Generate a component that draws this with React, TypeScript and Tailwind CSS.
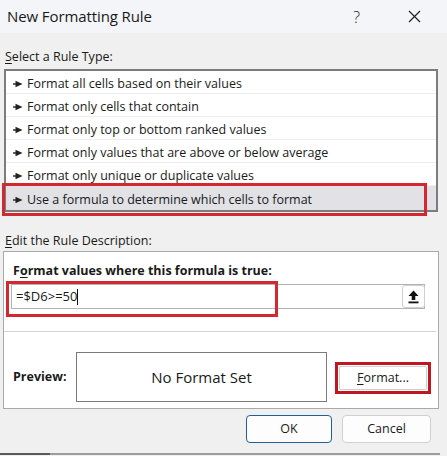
import React from "react";

const rules = [
  "Format all cells based on their values",
  "Format only cells that contain",
  "Format only top or bottom ranked values",
  "Format only values that are above or below average",
  "Format only unique or duplicate values",
  "Use a formula to determine which cells to format",
];

function Arrow() {
  return (
    <svg width="10" height="8" viewBox="0 0 10 8" className="shrink-0">
      <path d="M0 3.3h4V4.7H0z" fill="#222" />
      <path d="M2.5 0.8L9.5 4L2.5 7.2z" fill="#222" />
    </svg>
  );
}

export default function App() {
  return (
    <div
      className="relative w-[447px] h-[456px] bg-[#f0f0f0] overflow-hidden text-[#1a1a1a]"
      style={{ fontFamily: '"Open Sans", "Noto Sans", sans-serif' }}
    >
      {/* title bar */}
      <div className="h-[33px] bg-[#f3f5f8] flex items-center pl-[7px] pr-[20px]">
        <span className="text-[15px] tracking-[-0.1px]">New Formatting Rule</span>
        <span className="ml-auto text-[16px] mr-[48px] font-light">?</span>
        <svg width="13" height="13" viewBox="0 0 13 13" className="mr-[6px]">
          <path d="M1 1L12 12M12 1L1 12" stroke="#222" strokeWidth="1.2" />
        </svg>
      </div>

      <div className="pl-[5px] pt-[15px] h-[36px] text-[12.5px] leading-[18px]">
        <span className="underline underline-offset-2">S</span>elect a Rule Type:
      </div>

      {/* list */}
      <div className="ml-[4px] w-[434px] h-[143px] border-2 border-[#7c7c7c] bg-white flex flex-col">
        {rules.map((r, i) => (
          <div
            key={r}
            className={
              "flex items-center gap-[4px] pl-[7px] text-[12.5px] " +
              (i === 5
                ? "h-[25px] bg-[#e1e1e6] pt-[4px]"
                : "h-[23px] border-b border-[#eeeeee] pt-[4px]")
            }
          >
            <Arrow />
            <span>{r}</span>
          </div>
        ))}
      </div>
      <div className="absolute left-[2px] top-[183px] w-[425px] h-[33px] border-[3px] border-[#d3282f]" />

      <div className="pl-[5px] pt-[20px] h-[39px] text-[12.5px] leading-[18px]">
        <span className="underline underline-offset-2">E</span>dit the Rule Description:
      </div>

      {/* description box */}
      <div className="ml-[3px] w-[436px] h-[158px] border border-[#a9a9a9] bg-white flex flex-col">
        <div className="pl-[9px] pt-[10px] h-[32px] text-[12.5px] font-bold leading-[18px]">
          F<span className="underline underline-offset-2">o</span>rmat values where this formula is true:
        </div>
        <div className="ml-[7px] w-[414px] h-[25px] border border-[#b4b4b4] flex items-center">
          <span className="pl-[4px] text-[13px]">=$D6&gt;=50</span>
          <span className="w-px h-[16px] bg-[#111]" />
          <div className="ml-auto mr-[-1px] w-[23px] h-[23px] border border-[#cfcfcf] rounded-[3px] flex items-center justify-center bg-white">
            <svg width="11" height="14" viewBox="0 0 11 14">
              <path d="M5.5 0.5L10.5 6H7.3V10H3.7V6H0.5z" fill="#111" />
              <rect x="0.5" y="11.5" width="10" height="1.8" fill="#111" />
            </svg>
          </div>
        </div>
        <div className="mt-[22px] w-[432px] h-px bg-[#d5d5d5]" />
        <div className="flex items-center mt-[20px]">
          <span className="pl-[9px] w-[72px] text-[12.5px] font-bold">Preview:</span>
          <div className="w-[251px] h-[50px] border border-[#7a7a7a] flex items-center justify-center text-[15px]">
            No Format Set
          </div>
          <div className="ml-[8px] w-[96px] h-[32px] border-[3px] border-[#c0161f] flex items-center justify-center p-[1px] mt-[2px]">
            <div className="w-full h-full border border-[#d0d0d0] rounded-[2px] flex items-center justify-center text-[12.5px]">
              <span className="underline underline-offset-2">F</span>ormat...
            </div>
          </div>
        </div>
      </div>
      <div className="absolute left-[6px] top-[281px] w-[272px] h-[36px] border-[3px] border-[#d3282f]" />

      {/* buttons */}
      <div className="flex justify-end gap-[10px] pr-[16px] pt-[6px]">
        <div className="w-[86px] h-[28px] border border-[#1f5f9a] rounded-[4px] bg-[#fdfdfd] flex items-center justify-center text-[12.5px]">
          OK
        </div>
        <div className="w-[89px] h-[28px] border border-[#d0d0d0] rounded-[4px] bg-[#fdfdfd] flex items-center justify-center text-[12.5px]">
          Cancel
        </div>
      </div>

      <div className="absolute left-0 bottom-[1px] w-[440px] h-[2px] bg-[#9c9c9c]">
        <div className="w-[50px] h-full bg-[#5a5a5a]" />
      </div>
    </div>
  );
}
